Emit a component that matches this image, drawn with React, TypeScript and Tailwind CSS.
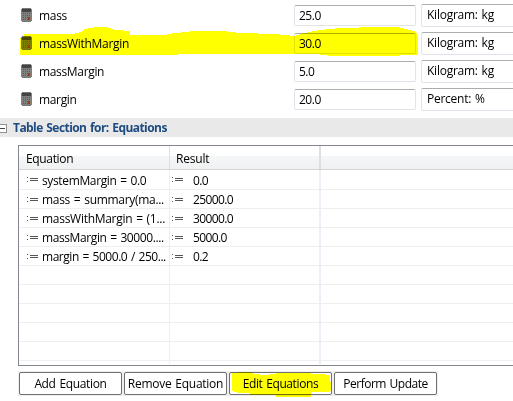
import type { ReactNode } from "react";

const properties = [
  { name: "mass", nameClass: "tracking-[-0.3px]", value: "25.0", unit: "Kilogram: kg" },
  { name: "massWithMargin", nameClass: "tracking-[-0.3px]", value: "30.0", unit: "Kilogram: kg" },
  { name: "massMargin", nameClass: "tracking-[-0.34px]", value: "5.0", unit: "Kilogram: kg" },
  { name: "margin", nameClass: "tracking-[-0.34px]", value: "20.0", unit: "Percent: %" },
];

const equations = [
  { text: "systemMargin = 0.0", cls: "pt-[3px] tracking-[-0.36px] [word-spacing:1px]", result: "0.0" },
  { text: "mass = summary(ma...", cls: "pt-[2px] tracking-[-0.3px] [word-spacing:1px]", result: "25000.0" },
  { text: "massWithMargin = (1...", cls: "pt-[2px] tracking-[-0.28px] [word-spacing:1px]", result: "30000.0" },
  { text: "massMargin = 30000....", cls: "pt-[2px] tracking-[-0.4px] [word-spacing:1px]", result: "5000.0" },
  { text: "margin = 5000.0 / 250...", cls: "pt-[2px] tracking-[-0.46px] [word-spacing:1px]", result: "0.2" },
];

const buttons = [
  { label: "Add Equation", cls: "tracking-[-0.34px] [word-spacing:1px]" },
  { label: "Remove Equation", cls: "tracking-[-0.26px] [word-spacing:1px]" },
  { label: "Edit Equations", cls: "tracking-[-0.4px] [word-spacing:1px]" },
  { label: "Perform Update", cls: "tracking-[-0.5px] [word-spacing:1px]" },
];

function Calculator() {
  return (
    <svg width="12" height="15" viewBox="0 0 12 15" shapeRendering="crispEdges" className="shrink-0">
      <rect x="1" width="9" height="14" fill="#777" />
      <rect y="1" width="11" height="12" fill="#808080" />
      <rect x="1" y="1" width="9" height="3" fill="#484343" />
      {[5, 7, 9, 11].map((y) =>
        [2, 4, 6, 8].map((x) => <rect key={`${x}-${y}`} x={x} y={y} width="1" height="1" fill="#5a5a5a" />),
      )}
      <rect x="7" y="9" width="2" height="3" fill="#974018" />
    </svg>
  );
}

function Assign() {
  return (
    <svg width="12" height="7" viewBox="0 0 12 7" shapeRendering="crispEdges" className="shrink-0">
      <path d="M1 1h1v1H1zM1 5h1v1H1zM4 2h8v1H4zM4 4h8v1H4z" fill="#555" />
    </svg>
  );
}

function Cell({ children, cls }: { children: ReactNode; cls: string }) {
  return <div className={`flex h-full shrink-0 items-center overflow-hidden ${cls}`}>{children}</div>;
}

export default function App() {
  return (
    <div className="relative h-[401px] w-[513px] overflow-hidden bg-white font-['Open_Sans','Noto_Sans',sans-serif] text-[12px] leading-4 whitespace-nowrap text-black">
      <div className="flex h-[118px] flex-col pt-1">
        {properties.map((p) => (
          <div key={p.name} className="flex h-7 items-start pl-[21px]">
            <div className="flex w-[273px] shrink-0 gap-[6px] pt-1">
              <Calculator />
              <span className={p.nameClass}>{p.name}</span>
            </div>
            <div className="mt-px mr-[5px] h-[21px] w-[122px] shrink-0 rounded-[2px] border border-[#e2e3ea] border-t-[#abadb3] pt-[2px] pl-1 tracking-[-0.5px]">
              {p.value}
            </div>
            <div className="h-[23px] w-[100px] shrink-0 rounded-[2px] border border-[#e2e3ea] border-t-[#abadb3] pt-[2px] pl-[5px] tracking-[-0.25px] [word-spacing:1px]">
              {p.unit}
            </div>
          </div>
        ))}
      </div>

      <div className="flex h-[19px] items-center bg-[#e9e9e9]">
        <svg width="7" height="9" viewBox="0 0 7 9" shapeRendering="crispEdges" className="mt-px mr-[6px]">
          <path d="M0 0h7v9H0z" fill="#919191" />
          <path d="M0 1h6v7H0z" fill="#fff" />
          <path d="M0 4h5v1H0z" fill="#444" />
        </svg>
        <span className="font-bold tracking-[-0.56px] text-[#1f4c80] [word-spacing:1px]">Table Section for: Equations</span>
      </div>

      <div className="mt-2 ml-[18px] h-[221px] border-y border-l border-[#828790]">
        <div className="flex h-6 border-b border-[#d5d5d5] bg-[linear-gradient(#fff_0,#fff_10px,#f5f6f8_10px,#f0f1f1_100%)]">
          <Cell cls="w-[151px] border-r border-[#dedfe1] pt-[3px] pl-[7px] tracking-[-0.34px]">Equation</Cell>
          <Cell cls="w-[151px] border-r-2 border-[#dedfe1] pt-[3px] pl-[6px] tracking-[-0.2px]">Result</Cell>
        </div>
        <div className="flex h-[194px] flex-col overflow-hidden">
          {Array.from({ length: 11 }, (_, i) => {
            const e = equations[i];
            return (
              <div
                key={i}
                className={`flex shrink-0 border-[#efefef] pl-px ${i === 0 ? "h-5 border-b" : i < 10 ? "h-[19px] border-b" : "h-[4px]"}`}
              >
                <Cell cls="w-[150px] gap-[4px] border-r border-[#ebf0f7] pl-[6px]">
                  {e && <Assign />}
                  {e && <span className={e.cls}>{e.text}</span>}
                </Cell>
                <Cell cls="w-[151px] gap-[10px] border-r-2 border-[#ebf0f7] pl-px">
                  {e && <Assign />}
                  {e && <span className={`tracking-[-0.6px] ${i === 0 ? "pt-[3px]" : "pt-[2px]"}`}>{e.result}</span>}
                </Cell>
              </div>
            );
          })}
        </div>
      </div>

      <div className="mt-[5px] ml-[18px] flex w-[420px]">
        {buttons.map((b) => (
          <div key={b.label} className="h-[25px] w-[105px] shrink-0 bg-[#efefef] p-px">
            <button className={`flex h-[23px] w-full items-center justify-center rounded-[2px] border border-[#707070] bg-white pt-px ${b.cls}`}>
              {b.label}
            </button>
          </div>
        ))}
      </div>

      <svg className="pointer-events-none absolute inset-0 mix-blend-multiply" width="513" height="401" shapeRendering="crispEdges" fill="#ff0">
        <path d="M20 38h4v-4h49l8-2 4-3 10-2h11l10 3 14 1v4h37v-1l10-1 17-2h28l18 2 35 1 10 1 9 1 10-3 16-3 20-2 38-1h20l12 3 6 2 2 5v18h-18v1h-72v-1l-16-1H180l-5 1H20z" />
        <path d="M232 373h6v-1h13l3 2 11 1 15-2h31v1h13l6 2v6h1v8l-1 2h-19v5h-35v-2h-26v-2h-12l-6-2z" />
      </svg>
    </div>
  );
}
